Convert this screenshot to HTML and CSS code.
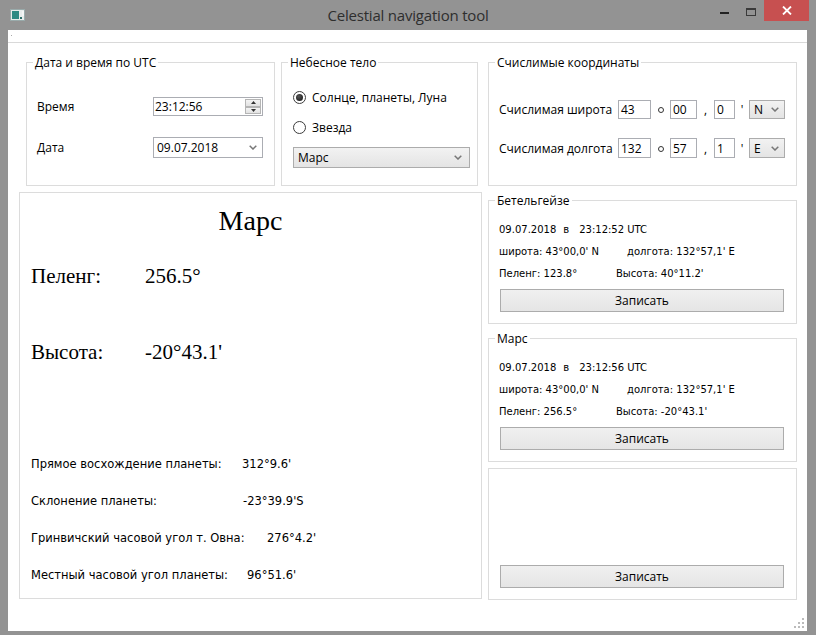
FILE: index.html
```html
<!DOCTYPE html>
<html lang="ru">
<head>
<meta charset="utf-8">
<title>Celestial navigation tool</title>
<link rel="stylesheet" href="styles.css">
</head>
<body>
<div class="window">
  <div class="titlebar">
    <div class="tb-left">
      <svg class="app-icon" width="15" height="12" viewBox="0 0 15 12">
        <rect x="0.5" y="0.5" width="14" height="11" fill="#e8ecec" stroke="#9aa"/>
        <rect x="2" y="2" width="7" height="8" fill="#2f8a84"/>
        <rect x="10" y="8" width="2" height="2" fill="#2f6f6a"/>
        <rect x="12.5" y="2" width="1" height="5" fill="#ffffff"/>
      </svg>
    </div>
    <div class="title">Celestial navigation tool</div>
    <div class="controls">
      <span class="ctl ctl-min"><span class="dash"></span></span>
      <span class="ctl ctl-max"><span class="box"></span></span>
      <span class="ctl ctl-close">
        <svg width="10" height="9" viewBox="0 0 10 9"><path d="M1 0.5 L9 8.5 M9 0.5 L1 8.5" stroke="#fff" stroke-width="1.8"/></svg>
      </span>
    </div>
  </div>

  <div class="client">
    <div class="menubar"><span class="menu-dot"></span></div>

    <div class="main">
      <div class="col-left">
        <div class="top-left">
          <section class="group g-time">
            <div class="group-title">Дата и время по UTC</div>
            <div class="time-form">
              <span class="ui-label">Время</span>
              <div class="spin">
                <span class="spin-text">23:12:56</span>
                <span class="spin-btns">
                  <span class="spin-btn"><svg width="5" height="3" viewBox="0 0 5 3"><path d="M0 3 L2.5 0 L5 3Z" fill="#333"/></svg></span>
                  <span class="spin-btn"><svg width="5" height="3" viewBox="0 0 5 3"><path d="M0 0 L2.5 3 L5 0Z" fill="#333"/></svg></span>
                </span>
              </div>
              <span class="ui-label">Дата</span>
              <div class="combo combo-white">
                <span class="combo-text">09.07.2018</span>
                <svg class="chev" width="8" height="5" viewBox="0 0 8 5"><path d="M0.7 0.7 L4 4 L7.3 0.7" stroke="#777" stroke-width="1.5" fill="none"/></svg>
              </div>
            </div>
          </section>

          <section class="group g-body">
            <div class="group-title">Небесное тело</div>
            <div class="radios">
              <label class="radio"><span class="radio-dot checked"></span><span>Солнце, планеты, Луна</span></label>
              <label class="radio"><span class="radio-dot"></span><span>Звезда</span></label>
            </div>
            <div class="combo combo-gray body-combo">
              <span class="combo-text">Марс</span>
              <svg class="chev" width="8" height="5" viewBox="0 0 8 5"><path d="M0.7 0.7 L4 4 L7.3 0.7" stroke="#777" stroke-width="1.5" fill="none"/></svg>
            </div>
          </section>
        </div>

        <section class="panel">
          <div class="panel-title">Марс</div>
          <div class="big-row big-first"><span class="big-key">Пеленг:</span><span>256.5°</span></div>
          <div class="big-row big-second"><span class="big-key">Высота:</span><span>-20°43.1'</span></div>
          <div class="stats">
            <div class="stat"><span class="stat-key k1">Прямое восхождение планеты:</span><span>312°9.6'</span></div>
            <div class="stat"><span class="stat-key k2">Склонение планеты:</span><span>-23°39.9'S</span></div>
            <div class="stat"><span class="stat-key k3">Гринвичский часовой угол т. Овна:</span><span>276°4.2'</span></div>
            <div class="stat"><span class="stat-key k4">Местный часовой угол планеты:</span><span>96°51.6'</span></div>
          </div>
        </section>
      </div>

      <div class="col-right">
        <section class="group g-coords">
          <div class="group-title">Счислимые координаты</div>
          <div class="coords">
            <span class="ui-label">Счислимая широта</span>
            <div class="fields">
              <span class="num n1">43</span><span class="sep s-deg"><span class="ring"></span></span><span class="num n2">00</span><span class="sep s-comma">,</span><span class="num n3">0</span><span class="sep s-min">'</span>
              <span class="combo combo-gray combo-sm"><span class="combo-text">N</span><svg class="chev" width="8" height="5" viewBox="0 0 8 5"><path d="M0.7 0.7 L4 4 L7.3 0.7" stroke="#777" stroke-width="1.5" fill="none"/></svg></span>
            </div>
            <span class="ui-label">Счислимая долгота</span>
            <div class="fields">
              <span class="num n1">132</span><span class="sep s-deg"><span class="ring"></span></span><span class="num n2">57</span><span class="sep s-comma">,</span><span class="num n3">1</span><span class="sep s-min">'</span>
              <span class="combo combo-gray combo-sm"><span class="combo-text">E</span><svg class="chev" width="8" height="5" viewBox="0 0 8 5"><path d="M0.7 0.7 L4 4 L7.3 0.7" stroke="#777" stroke-width="1.5" fill="none"/></svg></span>
            </div>
          </div>
        </section>

        <section class="group card">
          <div class="group-title">Бетельгейзе</div>
          <div class="card-lines">
            <div class="cl"><span>09.07.2018</span><span class="at">в</span><span>23:12:52 UTC</span></div>
            <div class="cl"><span class="c-left wa">широта: 43°00,0' N</span><span>долгота: 132°57,1' E</span></div>
            <div class="cl"><span class="c-left wb">Пеленг: 123.8°</span><span>Высота: 40°11.2'</span></div>
          </div>
          <button class="btn">Записать</button>
        </section>

        <section class="group card">
          <div class="group-title">Марс</div>
          <div class="card-lines">
            <div class="cl"><span>09.07.2018</span><span class="at">в</span><span>23:12:56 UTC</span></div>
            <div class="cl"><span class="c-left wa">широта: 43°00,0' N</span><span>долгота: 132°57,1' E</span></div>
            <div class="cl"><span class="c-left wb">Пеленг: 256.5°</span><span>Высота: -20°43.1'</span></div>
          </div>
          <button class="btn">Записать</button>
        </section>

        <section class="group card card-empty">
          <button class="btn">Записать</button>
        </section>
      </div>
    </div>

    <svg class="size-grip" width="10" height="10" viewBox="0 0 10 10">
      <rect x="8" y="0" width="2" height="2" fill="#bbb"/>
      <rect x="4" y="4" width="2" height="2" fill="#bbb"/>
      <rect x="8" y="4" width="2" height="2" fill="#bbb"/>
      <rect x="0" y="8" width="2" height="2" fill="#bbb"/>
      <rect x="4" y="8" width="2" height="2" fill="#bbb"/>
      <rect x="8" y="8" width="2" height="2" fill="#bbb"/>
    </svg>
  </div>
</div>
</body>
</html>
```

FILE: styles.css
```css
* { box-sizing: border-box; }

body {
  margin: 0;
  font-family: "Open Sans", "Noto Sans", sans-serif;
  font-size: 12px;
  color: #000;
}

.window {
  width: 816px;
  height: 635px;
  background: #939393;
  display: flex;
  flex-direction: column;
  overflow: hidden;
}

/* ---------- title bar ---------- */
.titlebar {
  height: 30px;
  flex: none;
  display: grid;
  grid-template-columns: 1fr auto 1fr;
  align-items: start;
}
.app-icon { display: block; margin: 9px 0 0 10px; }
.title {
  font-family: "Open Sans", sans-serif;
  font-size: 15px;
  line-height: 30px;
  color: #2e2e2e;
  letter-spacing: -0.2px;
}
.controls {
  justify-self: end;
  display: flex;
  margin-right: 7px;
}
.ctl { height: 21px; display: flex; justify-content: center; }
.ctl-min { width: 27px; }
.ctl-max { width: 26px; }
.ctl-close { width: 45px; background: #c75050; align-items: center; }
.dash { width: 9px; height: 2px; background: #222; margin-top: 12px; }
.box {
  width: 10px; height: 8px; margin-top: 8px;
  border: 1px solid #3a3a3a; border-top-width: 2px;
}

/* ---------- client ---------- */
.client {
  flex: 1;
  margin: 0 9px 4px 8px;
  background: #fff;
  position: relative;
  display: flex;
  flex-direction: column;
}
.menubar {
  height: 13px;
  flex: none;
  border-bottom: 1px solid #d9d9d9;
  padding: 5px 0 0 3px;
}
.menu-dot { display: block; width: 1px; height: 1px; background: #aaa; }

.main {
  display: flex;
  gap: 6px;
  padding: 19px 0 0 11px;
}
.col-left { width: 463px; display: flex; flex-direction: column; }
.col-right { width: 309px; display: flex; flex-direction: column; }
.top-left { display: flex; gap: 6px; padding-left: 7px; }

/* ---------- group boxes ---------- */
.group { border: 1px solid #dcdcdc; }
.group-title {
  margin: -8px 0 0 6px;
  padding: 0 2px;
  width: max-content;
  background: #fff;
  line-height: 15px;
  font-size: 12px;
}
.g-time { width: 249px; height: 124px; }
.g-body { width: 197px; height: 124px; }
.g-coords { height: 124px; }

.ui-label { font-size: 12px; }

/* time group */
.time-form {
  display: grid;
  grid-template-columns: 116px 110px;
  grid-template-rows: 19px 21px;
  row-gap: 21px;
  align-items: center;
  margin: 27px 0 0 10px;
}
.spin {
  height: 19px;
  border: 1px solid #abadb3;
  display: flex;
  align-items: stretch;
}
.spin-text { flex: 1; padding-left: 1px; line-height: 17px; }
.spin-btns { width: 17px; display: flex; flex-direction: column; padding: 1px 1px 1px 0; gap: 0; }
.spin-btn {
  flex: 1;
  border: 1px solid #b5b5b5;
  background: linear-gradient(#f4f4f4, #e2e2e2);
  display: flex;
  align-items: center;
  justify-content: center;
}

.combo {
  display: flex;
  align-items: center;
  justify-content: space-between;
  border: 1px solid #abadb3;
  height: 21px;
}
.combo-white { background: #fff; padding: 0 5px 0 3px; }
.combo-gray {
  background: linear-gradient(#f2f2f2, #e4e4e4);
  border-color: #acacac;
  padding: 0 7px 0 4px;
}
.chev { display: block; flex: none; }

/* body group */
.radios {
  margin: 19px 0 0 11px;
  display: flex;
  flex-direction: column;
  gap: 14px;
}
.radio { display: flex; align-items: center; gap: 6px; height: 16px; }
.radio-dot {
  width: 13px; height: 13px;
  border-radius: 50%;
  border: 1px solid #3c3c3c;
  background: #fff;
  display: flex;
  align-items: center;
  justify-content: center;
}
.radio-dot.checked::after {
  content: "";
  width: 7px; height: 7px;
  border-radius: 50%;
  background: radial-gradient(circle at 40% 35%, #555, #111);
}
.body-combo { width: 177px; margin: 12px 0 0 11px; }

/* coordinates */
.coords {
  display: grid;
  grid-template-columns: 120px auto;
  grid-template-rows: 19px 20px;
  row-gap: 19px;
  align-items: center;
  margin: 30px 0 0 9px;
}
.coords .ui-label { padding-left: 1px; }
.fields { display: flex; align-items: center; height: 100%; }
.num {
  height: 100%;
  border: 1px solid #abadb3;
  padding-left: 2px;
  display: flex;
  align-items: center;
}
.n1 { width: 33px; }
.n2 { width: 27px; }
.n3 { width: 21px; }
.sep { display: flex; justify-content: center; align-items: center; }
.s-deg { width: 19px; }
.s-comma { width: 17px; }
.s-min { width: 14px; }
.ring { width: 6px; height: 6px; border: 1px solid #333; border-radius: 50%; margin-top: 1px; }
.combo-sm { width: 36px; height: 100%; padding: 0 5px 0 4px; }

/* ---------- main panel ---------- */
.panel {
  margin-top: 6px;
  height: 407px;
  border: 1px solid #dcdcdc;
  font-family: "Liberation Serif", "Times New Roman", serif;
}
.panel-title {
  text-align: center;
  font-size: 28px;
  line-height: 31px;
  margin-top: 12px;
}
.big-row {
  display: flex;
  font-size: 21px;
  line-height: 23px;
  padding-left: 11px;
}
.big-first { margin-top: 29px; }
.big-second { margin-top: 53px; }
.big-key { width: 114px; }

.stats {
  margin-top: 93px;
  padding-left: 11px;
  display: flex;
  flex-direction: column;
  gap: 22px;
  font-family: "DejaVu Sans", sans-serif;
  font-size: 11.5px;
}
.stat { display: flex; line-height: 15px; }
.k1 { width: 211px; }
.k2 { width: 212px; }
.k3 { width: 236px; }
.k4 { width: 216px; }

/* ---------- cards ---------- */
.card {
  margin-top: 14px;
  height: 124px;
  display: flex;
  flex-direction: column;
}
.card-lines {
  margin: 11px 0 0 10px;
  font-family: "DejaVu Sans", sans-serif;
  font-size: 10px;
}
.cl { display: flex; line-height: 22px; }
.at { margin: 0 10px 0 7px; }
.wa { width: 128px; }
.wb { width: 117px; }

.btn {
  display: block;
  margin: 4px 12px 0 11px;
  height: 23px;
  border: 1px solid #acacac;
  background: linear-gradient(#f0f0f0, #e5e5e5);
  font-family: "Open Sans", sans-serif;
  font-size: 12px;
  color: #000;
  padding: 0;
}
.card-empty {
  margin-top: 6px;
  height: 132px;
  justify-content: flex-end;
  padding-bottom: 11px;
}

.size-grip { position: absolute; right: 3px; bottom: 3px; }
```
